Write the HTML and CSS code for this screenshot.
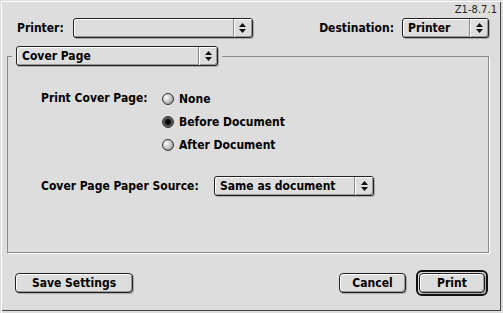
FILE: index.html
```html
<!DOCTYPE html>
<html lang="en">
<head>
    <meta charset="UTF-8">
    <title>Print</title>
    <link rel="stylesheet" href="styles.css">
</head>
<body>
    <div class="window">
        <div class="version">Z1-8.7.1</div>

        <div class="top-row">
            <div class="field">
                <span class="label">Printer:</span>
                <div class="popup popup-printer">
                    <span class="popup-text"></span>
                    <span class="popup-arrows"><svg width="7" height="10" viewBox="0 0 7 10"><path d="M3.5 0L7 4H0Z M0 6H7L3.5 10Z"/></svg></span>
                </div>
            </div>
            <div class="field field-dest">
                <span class="label">Destination:</span>
                <div class="popup popup-dest">
                    <span class="popup-text">Printer</span>
                    <span class="popup-arrows"><svg width="7" height="10" viewBox="0 0 7 10"><path d="M3.5 0L7 4H0Z M0 6H7L3.5 10Z"/></svg></span>
                </div>
            </div>
        </div>

        <fieldset class="panel">
            <legend class="panel-legend">
                <div class="popup popup-panel">
                    <span class="popup-text">Cover Page</span>
                    <span class="popup-arrows"><svg width="7" height="10" viewBox="0 0 7 10"><path d="M3.5 0L7 4H0Z M0 6H7L3.5 10Z"/></svg></span>
                </div>
            </legend>
            <div class="panel-body">
                <div class="option-row">
                    <span class="option-label">Print Cover Page:</span>
                    <div class="radios">
                        <div class="radio"><span class="radio-btn"></span>None</div>
                        <div class="radio"><span class="radio-btn checked"></span>Before Document</div>
                        <div class="radio"><span class="radio-btn"></span>After Document</div>
                    </div>
                </div>
                <div class="source-row">
                    <span class="option-label source-label">Cover Page Paper Source:</span>
                    <div class="popup popup-source">
                        <span class="popup-text">Same as document</span>
                        <span class="popup-arrows"><svg width="7" height="10" viewBox="0 0 7 10"><path d="M3.5 0L7 4H0Z M0 6H7L3.5 10Z"/></svg></span>
                    </div>
                </div>
            </div>
        </fieldset>

        <div class="buttons">
            <button class="btn btn-save">Save Settings</button>
            <div class="spacer"></div>
            <button class="btn btn-cancel">Cancel</button>
            <div class="default-ring">
                <button class="btn btn-print">Print</button>
            </div>
        </div>
    </div>
</body>
</html>
```

FILE: styles.css
```css
/* Reset */
* {
    margin: 0;
    padding: 0;
    box-sizing: border-box;
}

body {
    font-family: "DejaVu Sans Condensed", "DejaVu Sans", sans-serif;
    font-weight: bold;
    font-size: 12px;
    color: #000;
    background-color: #dddddd;
}

.window {
    width: 503px;
    height: 313px;
    padding-top: 4px;
    background-color: #dddddd; /* Platinum gray */
    box-shadow: inset 1px 1px 0 #dddddd, inset 2px 2px 0 #ffffff,
                inset -2px -2px 0 #dddddd, inset -3px -3px 0 #444444;
}

.version {
    font-family: "DejaVu Sans", sans-serif;
    font-weight: normal;
    font-size: 10px;
    line-height: 12px;
    text-align: right;
    padding-right: 6px;
    color: #222;
}

/* Printer / Destination row */
.top-row {
    display: flex;
    justify-content: space-between;
    margin-top: 2px;
    padding: 0 14px 0 17px;
    height: 20px;
}

.field {
    display: flex;
    align-items: center;
    gap: 9px;
}

.field-dest {
    gap: 8px;
}

/* Popup menus */
.popup {
    display: flex;
    align-items: stretch;
    height: 20px;
    border: 1px solid #222;
    border-radius: 3px;
    background-color: #dddddd;
    box-shadow: inset 1px 1px 0 #ffffff, inset -1px -1px 0 #999999, 1px 1px 0 #aaaaaa;
}

.popup-text {
    flex: 1;
    padding-left: 5px;
    line-height: 18px;
    white-space: nowrap;
}

.popup-arrows {
    width: 19px;
    display: flex;
    align-items: center;
    justify-content: center;
    border-left: 1px solid #888;
    box-shadow: inset 1px 1px 0 #ffffff;
    border-radius: 0 2px 2px 0;
}

.popup-arrows svg {
    fill: #111;
}

.popup-printer {
    width: 180px;
}

.popup-dest {
    width: 87px;
}

.popup-panel {
    width: 202px;
}

.popup-source {
    width: 160px;
}

/* Settings panel */
.panel {
    margin: 8px 14px 0 7px;
    height: 207px;
    border: 1px solid #8a8a8a;
    box-shadow: 1px 1px 0 #ffffff;
    padding: 0;
}

.panel-legend {
    margin-left: 4px;
    padding: 0 4px;
}

.panel-body {
    padding: 21px 0 0 33px;
}

.option-row {
    display: flex;
}

.option-label {
    width: 121px;
    height: 23px;
    line-height: 23px;
}

.radios {
    display: flex;
    flex-direction: column;
}

.radio {
    display: flex;
    align-items: center;
    gap: 5px;
    height: 23px;
}

.radio-btn {
    width: 12px;
    height: 12px;
    border-radius: 50%;
    border: 1px solid #333;
    background: radial-gradient(circle at 35% 35%, #ffffff 0, #cfcfcf 40%, #808080 100%);
}

.radio-btn.checked {
    background: radial-gradient(circle at 50% 50%, #000 0, #111 2.5px, #4a4a4a 3.5px, #8a8a8a 100%);
}

.source-row {
    display: flex;
    align-items: center;
    margin-top: 20px;
}

.source-label {
    width: 173px;
    height: 20px;
    line-height: 20px;
}

/* Buttons */
.buttons {
    display: flex;
    align-items: center;
    height: 26px;
    margin-top: 17px;
    padding: 0 15px 0 15px;
}

.spacer {
    flex: 1;
}

.btn {
    font-family: inherit;
    font-weight: bold;
    font-size: 12px;
    color: #000;
    height: 20px;
    border: 1px solid #222;
    border-radius: 4px;
    background-color: #dddddd;
    box-shadow: inset 1px 1px 0 #ffffff, inset -1px -1px 0 #999999, 1px 1px 0 #aaaaaa;
}

.btn-save {
    width: 118px;
}

.btn-cancel {
    width: 67px;
    margin-right: 10px;
}

.default-ring {
    border: 2px solid #111;
    border-radius: 6px;
    padding: 1px;
    background-color: #dddddd;
}

.btn-print {
    display: block;
    width: 66px;
}
```
